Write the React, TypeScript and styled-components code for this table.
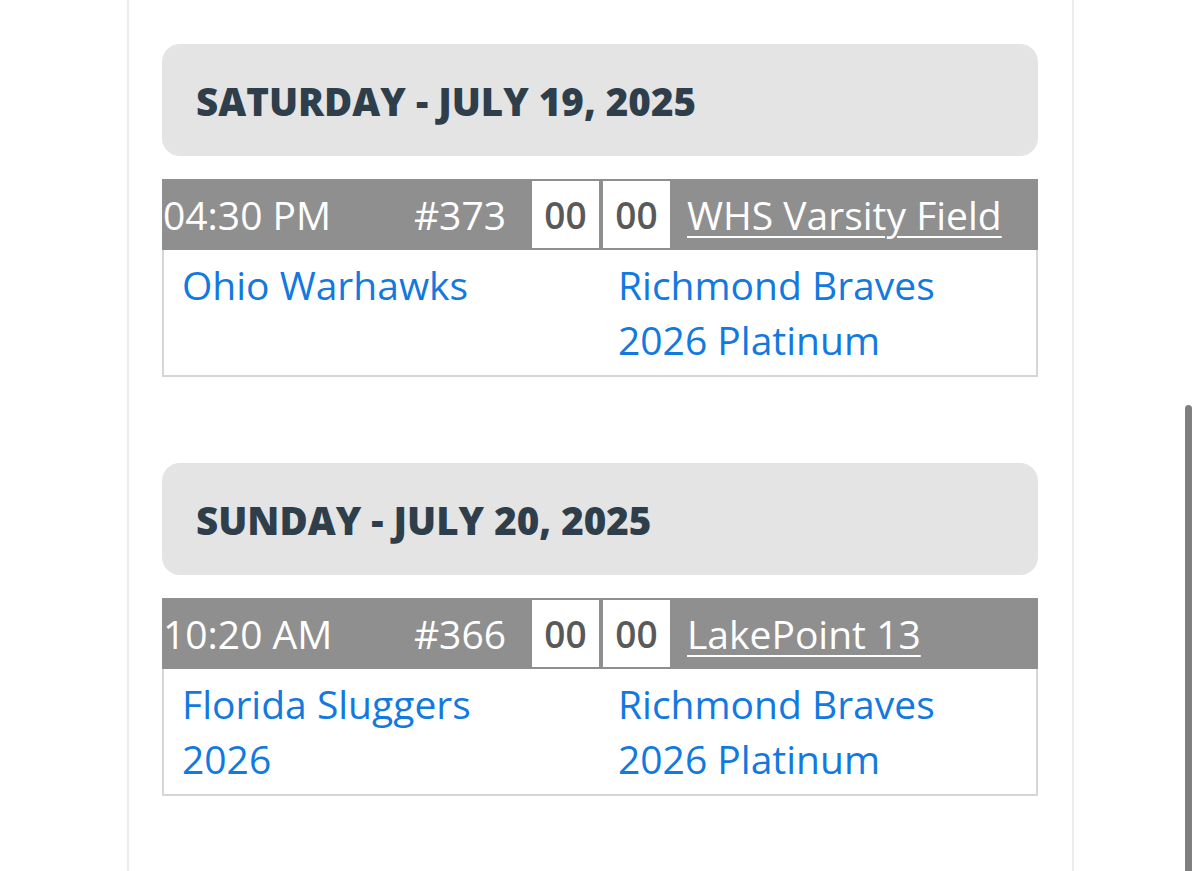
import React from "react";
import styled, { createGlobalStyle } from "styled-components";

const Global = createGlobalStyle`
  html, body { margin: 0; padding: 0; background: #ffffff; overflow: hidden; }
  body { font-family: "Open Sans", "Noto Sans", Arial, sans-serif; }
  * { box-sizing: border-box; }
`;

const Page = styled.div`
  position: relative;
  width: 1200px;
  height: 871px;
  background: #ffffff;
  overflow: hidden;
`;

const Panel = styled.div`
  margin-left: 127px;
  width: 947px;
  height: 871px;
  border-left: 2px solid #ededed;
  border-right: 2px solid #ededed;
  padding: 44px 34px 0 33px;
  display: flex;
  flex-direction: column;
`;

const Day = styled.section`
  display: flex;
  flex-direction: column;
  margin-bottom: 86px;
`;

const DateHeader = styled.h2`
  margin: 0 0 23px 0;
  height: 112px;
  background: #e4e4e4;
  border-radius: 18px;
  display: flex;
  align-items: center;
  padding: 2px 0 0 34px;
  font-family: "Open Sans", sans-serif;
  font-weight: 800;
  font-size: 38.5px;
  color: #2f3e4b;
  letter-spacing: 0;
`;

const GameBar = styled.div`
  height: 71px;
  background: #8f8f8f;
  display: flex;
  align-items: center;
  color: #ffffff;
  font-size: 39px;
  padding: 0 2px 0 0;
`;

const Time = styled.span`
  width: 246px;
  padding-left: 1px;
  white-space: nowrap;
`;

const GameNo = styled.span`
  width: 124px;
  text-align: right;
  padding-right: 26px;
  white-space: nowrap;
`;

const Scores = styled.div`
  display: flex;
  gap: 4px;
  height: 67px;
`;

const Score = styled.span`
  width: 67px;
  height: 67px;
  background: #ffffff;
  color: #595959;
  font-weight: 600;
  font-size: 37px;
  display: flex;
  align-items: center;
  justify-content: center;
`;

const Venue = styled.a`
  margin-left: 17px;
  color: #ffffff;
  text-decoration: underline;
  text-decoration-thickness: 2px;
  text-underline-offset: 6px;
  white-space: nowrap;
`;

const Teams = styled.div`
  display: grid;
  grid-template-columns: 1fr 1fr;
  border: 2px solid #d6d6d6;
  border-top: none;
  padding: 7px 0 8px 0;
`;

const Team = styled.a`
  color: #1279e0;
  font-size: 39px;
  line-height: 55px;
  padding-left: 18px;
  text-decoration: none;
`;

const ScrollThumb = styled.div`
  position: absolute;
  right: 8px;
  top: 405px;
  width: 7px;
  height: 480px;
  border-radius: 4px;
  background: #7f7f7f;
`;

type Game = {
  time: string;
  no: string;
  venue: string;
  home: string[];
  away: string[];
};

const days: { date: string; games: Game[] }[] = [
  {
    date: "SATURDAY - JULY 19, 2025",
    games: [
      {
        time: "04:30 PM",
        no: "#373",
        venue: "WHS Varsity Field",
        home: ["Ohio Warhawks"],
        away: ["Richmond Braves", "2026 Platinum"],
      },
    ],
  },
  {
    date: "SUNDAY - JULY 20, 2025",
    games: [
      {
        time: "10:20 AM",
        no: "#366",
        venue: "LakePoint 13",
        home: ["Florida Sluggers", "2026"],
        away: ["Richmond Braves", "2026 Platinum"],
      },
    ],
  },
];

export default function App() {
  return (
    <Page>
      <Global />
      <Panel>
        {days.map((d) => (
          <Day key={d.date}>
            <DateHeader>{d.date}</DateHeader>
            {d.games.map((g) => (
              <div key={g.no}>
                <GameBar>
                  <Time>{g.time}</Time>
                  <GameNo>{g.no}</GameNo>
                  <Scores>
                    <Score>00</Score>
                    <Score>00</Score>
                  </Scores>
                  <Venue href="#">{g.venue}</Venue>
                </GameBar>
                <Teams>
                  <Team href="#">
                    {g.home.map((l) => (
                      <div key={l}>{l}</div>
                    ))}
                  </Team>
                  <Team href="#">
                    {g.away.map((l) => (
                      <div key={l}>{l}</div>
                    ))}
                  </Team>
                </Teams>
              </div>
            ))}
          </Day>
        ))}
      </Panel>
      <ScrollThumb />
    </Page>
  );
}
